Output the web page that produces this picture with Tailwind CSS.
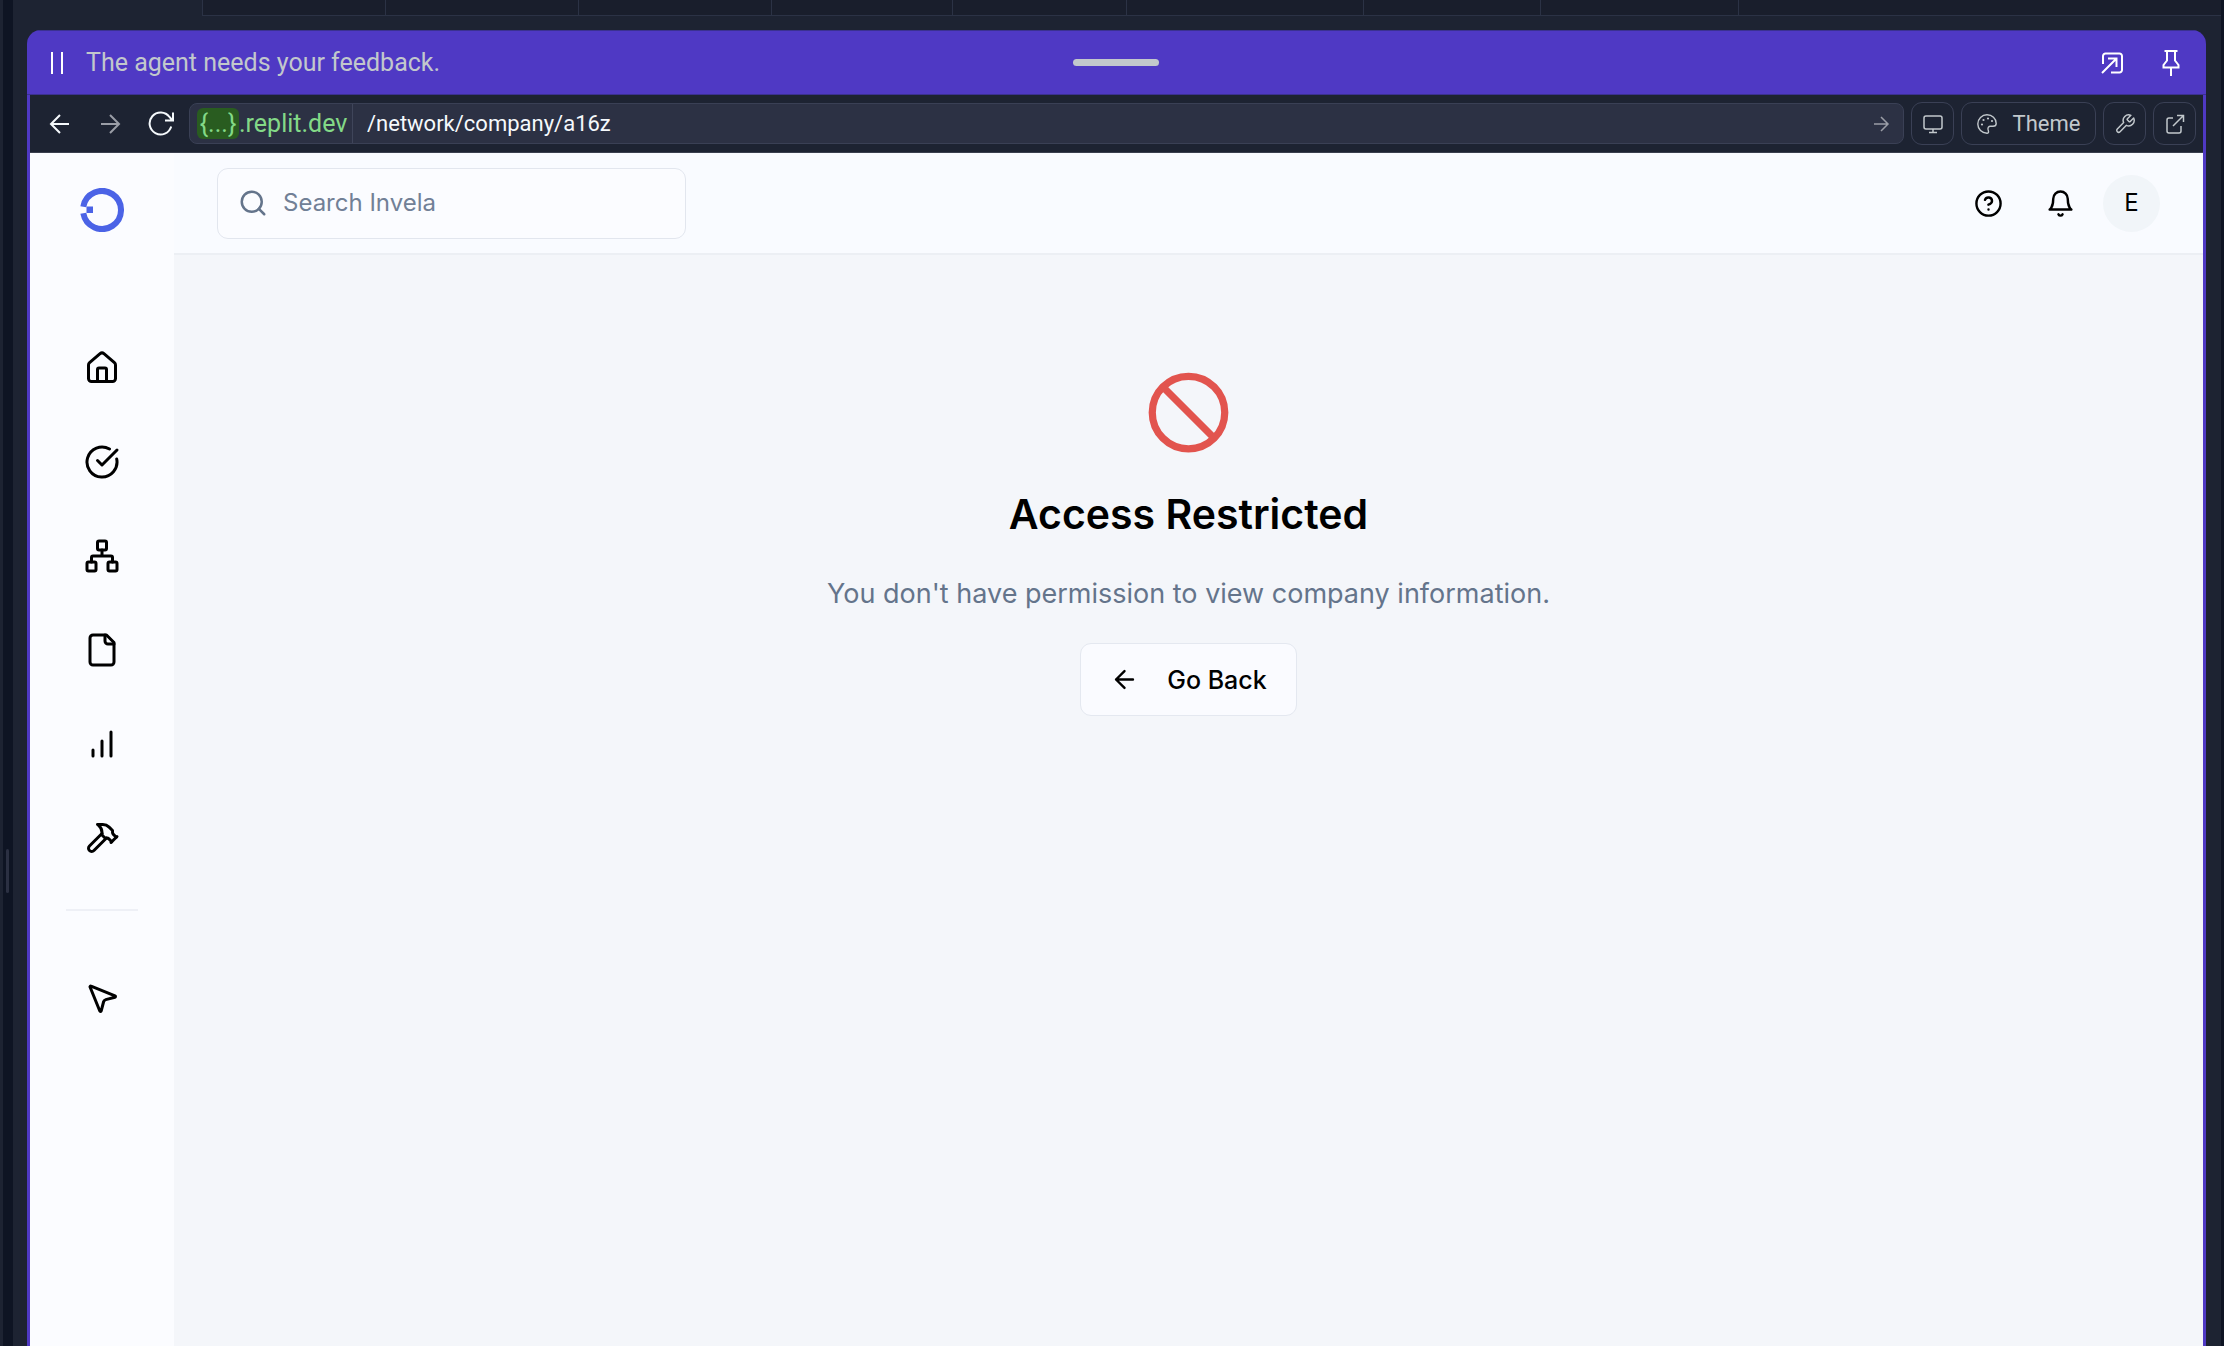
<!DOCTYPE html>
<html lang="en">
<head>
<meta charset="utf-8">
<title>Invela – Access Restricted</title>
<script src="https://cdn.jsdelivr.net/npm/@tailwindcss/browser@4"></script>
</head>
<body class="flex h-screen overflow-hidden bg-[#1d2332] font-['Roboto',sans-serif]">
  <div class="w-[3px] shrink-0 bg-[#1d2332]"></div>
  <div class="flex w-[10px] shrink-0 flex-col bg-[#0e1423] pt-[849px] pl-[3px]" role="separator">
    <div class="h-[44px] w-[3px] rounded-full bg-[#2b3042]"></div>
  </div>

  <div class="flex min-w-0 flex-1 flex-col">
    <!-- Tab strip -->
    <div class="flex h-4 shrink-0">
      <div class="w-[189px]"></div>
      <div class="w-[183px] border-b border-l border-[#2b3245] bg-[#191e2c]"></div>
      <div class="w-[193px] border-b border-l border-[#2b3245] bg-[#191e2c]"></div>
      <div class="w-[193px] border-b border-l border-[#2b3245] bg-[#191e2c]"></div>
      <div class="w-[181px] border-b border-l border-[#2b3245] bg-[#191e2c]"></div>
      <div class="w-[174px] border-b border-l border-[#2b3245] bg-[#191e2c]"></div>
      <div class="w-[237px] border-b border-l border-[#2b3245] bg-[#191e2c]"></div>
      <div class="w-[177px] border-b border-l border-[#2b3245] bg-[#191e2c]"></div>
      <div class="w-[198px] border-b border-l border-[#2b3245] bg-[#191e2c]"></div>
      <div class="flex-1 border-b border-l border-[#2b3245] bg-[#191e2c]"></div>
    </div>

    <div class="mr-[15px] ml-[14px] mt-[14px] flex min-h-0 flex-1 flex-col overflow-hidden rounded-t-[14px]">
      <!-- Agent banner -->
      <div class="grid h-[65px] shrink-0 grid-cols-[1fr_auto_1fr] items-center border-t border-b border-[#3b3191] bg-[#4f39c4] pr-[26px] pl-6">
        <div class="flex items-center">
          <svg class="h-[22px] w-[12px]" viewBox="0 0 12 22" stroke="#fff" stroke-width="2"><path d="M1 0v22M11 0v22"/></svg>
          <span class="ml-[23px] text-[25px] leading-8 text-[#c2c8cc]">The agent needs your feedback.</span>
        </div>
        <div class="h-[7px] w-[86px] rounded-full bg-[#c2c8cc]"></div>
        <div class="flex items-center justify-end gap-[39px]">
          <button aria-label="Open in tab"><svg class="size-[22px]" viewBox="0 0 22 22" fill="none" stroke="#fff" stroke-width="2"><path d="M2 12V4a2.500 2.500 0 0 1 2.500-2.500h14A2.500 2.500 0 0 1 21 4v14a2.500 2.500 0 0 1-2.500 2.500H10M1 21 15 7M7 6.500h8.500V15"/></svg></button>
          <button aria-label="Pin"><svg class="h-[27px] w-[18px]" viewBox="0 0 18 27" fill="none" stroke="#fff" stroke-width="2"><path d="M2.500 2h13M5 2v9.500L1.500 16v2.500h15V16L13 11.500V2M9 18.500V27"/></svg></button>
        </div>
      </div>

      <!-- Browser window -->
      <div class="flex min-h-0 flex-1 flex-col border-x-[3px] border-[#4f39c4]">
        <div class="flex h-[58px] shrink-0 items-center border-b border-[#3a3f4e] bg-[#1d2332] pr-[7px] pl-[18px]">
          <button aria-label="Back"><svg class="size-[24px]" viewBox="0 0 24 24" fill="none" stroke="#f5f9fc" stroke-width="2"><path d="M21 12H3M12 3 3 12l9 9"/></svg></button>
          <button class="ml-[26px]" aria-label="Forward"><svg class="size-[24px]" viewBox="0 0 24 24" fill="none" stroke="#9a9da6" stroke-width="2"><path d="M3 12h18M12 3l9 9-9 9"/></svg></button>
          <button class="ml-[26px]" aria-label="Reload"><svg class="size-[26px]" viewBox="0 0 26 26" fill="none" stroke="#f5f9fc" stroke-width="2"><path d="M23.200 15.500A11 11 0 1 1 21.500 6l3 3.500M25 1.500V9.500H17"/></svg></button>
          <div class="ml-[15px] flex h-[41px] flex-1 items-center rounded-lg border border-[#3a4055] bg-[#2c3144] pl-[7px] text-[22px] leading-8">
            <span class="flex h-[31px] w-[42px] items-center justify-center rounded-md bg-[#295c20] text-[25px] text-[#83d987]">{...}</span>
            <span class="w-[113px] text-[25px] text-[#83d987]">.replit.dev</span>
            <input aria-label="Path" value="/network/company/a16z" class="h-[39px] min-w-0 flex-1 border-l border-[#3f455a] bg-transparent pl-[14px] text-[#f5f9fc]">
            <button class="mr-[13px]" aria-label="Go"><svg class="size-[18px]" viewBox="0 0 18 18" fill="none" stroke="#9a9da6" stroke-width="1.500"><path d="M2 9h14M9 2l7 7-7 7"/></svg></button>
          </div>
          <div class="ml-[7px] flex gap-[7px] text-[#c2c8cc]">
            <button class="flex size-[43px] items-center justify-center rounded-[11px] border border-[#3a4055]" aria-label="Devices"><svg class="size-[20px]" viewBox="0 0 20 20" fill="none" stroke="currentColor" stroke-width="1.500"><rect x="1" y="2" width="18" height="13" rx="2"/><path d="M10 15v3.500M6 18.500h8"/></svg></button>
            <button class="flex h-[43px] w-[135px] items-center justify-center gap-4 rounded-[11px] border border-[#3a4055]">
              <svg class="size-[20px]" viewBox="0 0 20 20" fill="none" stroke="currentColor" stroke-width="1.400"><path d="M10 .8C4.900.8.800 4.900.800 10S4.900 19.200 10 19.200c1.300 0 1.700-.9 1.500-1.800l-.5-2.200c-.3-1.600.7-2.900 2.300-2.900h2.700c1.900 0 3.200-1.200 3.200-2.800C19.200 4.500 15.100.8 10 .8Z"/><g fill="currentColor" stroke="none"><circle cx="5" cy="10.500" r="1.100"/><circle cx="6.500" cy="6" r="1.100"/><circle cx="11" cy="4.500" r="1.100"/><circle cx="15" cy="7" r="1.100"/></g></svg>
              <span class="text-[22px] leading-8">Theme</span>
            </button>
            <button class="flex size-[43px] items-center justify-center rounded-[11px] border border-[#3a4055]" aria-label="Developer tools"><svg class="size-[22px]" viewBox="0 0 24 24" fill="none" stroke="currentColor" stroke-width="1.600" stroke-linejoin="round"><path d="M14.700 6.300a1 1 0 0 0 0 1.400l1.600 1.600a1 1 0 0 0 1.400 0l3.770-3.770a6 6 0 0 1-7.940 7.940l-6.910 6.910a2.120 2.120 0 0 1-3-3l6.910-6.910a6 6 0 0 1 7.940-7.940l-3.760 3.760z"/></svg></button>
            <button class="flex size-[43px] items-center justify-center rounded-[11px] border border-[#3a4055]" aria-label="Open in new tab"><svg class="size-[20px]" viewBox="0 0 20 20" fill="none" stroke="currentColor" stroke-width="1.500"><path d="M8 4H4a2 2 0 0 0-2 2v11a2 2 0 0 0 2 2h10a2 2 0 0 0 2-2v-5M12 1.500h6.500V8M18.500 1.500 8 12"/></svg></button>
          </div>
        </div>

        <!-- Invela application -->
        <div class="flex min-h-0 flex-1 bg-[#f4f6fa] font-['Inter',sans-serif] text-black">
          <aside class="flex w-[144px] shrink-0 flex-col items-center bg-[#fbfcff] pt-[35px]">
            <a href="#" aria-label="Invela"><svg class="size-[44px]" viewBox="0 0 44 44" fill="none"><path d="M3.300 18.700A19 19 0 1 1 3.300 25.300" stroke="#4b63e6" stroke-width="6"/><path d="M6.500 18.500h6.500v6.500H6.500z" fill="#4b63e6"/></svg></a>
            <nav class="mt-[89px] flex flex-col items-center">
              <a href="#" aria-label="Home" class="flex h-[94px] w-[72px] items-center justify-center"><svg class="size-[36px]" viewBox="0 0 24 24" fill="none" stroke="currentColor" stroke-width="2" stroke-linecap="round" stroke-linejoin="round"><path d="M15 21v-8a1 1 0 0 0-1-1h-4a1 1 0 0 0-1 1v8"/><path d="M3 10a2 2 0 0 1 .709-1.528l7-5.999a2 2 0 0 1 2.582 0l7 5.999A2 2 0 0 1 21 10v9a2 2 0 0 1-2 2H5a2 2 0 0 1-2-2z"/></svg></a>
              <a href="#" aria-label="Tasks" class="flex h-[94px] w-[72px] items-center justify-center"><svg class="size-[36px]" viewBox="0 0 24 24" fill="none" stroke="currentColor" stroke-width="2" stroke-linecap="round" stroke-linejoin="round"><path d="M21.801 10A10 10 0 1 1 17 3.335"/><path d="m9 11 3 3L22 4"/></svg></a>
              <a href="#" aria-label="Network" class="flex h-[94px] w-[72px] items-center justify-center"><svg class="size-[36px]" viewBox="0 0 24 24" fill="none" stroke="currentColor" stroke-width="2" stroke-linecap="round" stroke-linejoin="round"><rect x="16" y="16" width="6" height="6" rx="1"/><rect x="2" y="16" width="6" height="6" rx="1"/><rect x="9" y="2" width="6" height="6" rx="1"/><path d="M5 16v-3a1 1 0 0 1 1-1h12a1 1 0 0 1 1 1v3M12 12V8"/></svg></a>
              <a href="#" aria-label="Files" class="flex h-[94px] w-[72px] items-center justify-center"><svg class="size-[36px]" viewBox="0 0 24 24" fill="none" stroke="currentColor" stroke-width="2" stroke-linecap="round" stroke-linejoin="round"><path d="M15 2H6a2 2 0 0 0-2 2v16a2 2 0 0 0 2 2h12a2 2 0 0 0 2-2V7Z"/><path d="M14 2v4a2 2 0 0 0 2 2h4"/></svg></a>
              <a href="#" aria-label="Insights" class="flex h-[94px] w-[72px] items-center justify-center"><svg class="size-[36px]" viewBox="0 0 24 24" fill="none" stroke="currentColor" stroke-width="2" stroke-linecap="round" stroke-linejoin="round"><path d="M12 20V10M18 20V4M6 20v-4"/></svg></a>
              <a href="#" aria-label="Builder" class="flex h-[94px] w-[72px] items-center justify-center"><svg class="size-[36px]" viewBox="0 0 24 24" fill="none" stroke="currentColor" stroke-width="2" stroke-linecap="round" stroke-linejoin="round"><path d="m15 12-8.373 8.373a1 1 0 1 1-3-3L12 9"/><path d="m18 15 4-4"/><path d="m21.500 11.500-1.914-1.914A2 2 0 0 1 19 8.172V7l-2.260-2.260a6 6 0 0 0-4.202-1.756L9 2.960l.92.82A6.180 6.180 0 0 1 12 8.400V10l2 2h1.172a2 2 0 0 1 1.414.586L18.500 14.500"/></svg></a>
              <div class="my-[24px] h-[2px] w-[72px] bg-[#eef0f6]"></div>
              <a href="#" aria-label="Playground" class="flex h-[126px] w-[72px] items-center justify-center"><svg class="size-[36px]" viewBox="0 0 24 24" fill="none" stroke="currentColor" stroke-width="2" stroke-linecap="round" stroke-linejoin="round"><path d="M4.037 4.688a.495.495 0 0 1 .651-.651l16 6.500a.5.5 0 0 1-.063.947l-6.124 1.580a2 2 0 0 0-1.438 1.435l-1.579 6.126a.5.5 0 0 1-.947.063z"/></svg></a>
            </nav>
          </aside>

          <div class="flex min-w-0 flex-1 flex-col">
            <header class="flex h-[102px] shrink-0 items-center border-b-2 border-[#eceff4] bg-[#f9fbff] px-[43px]">
              <label class="flex h-[71px] w-[469px] items-center gap-[15px] rounded-[11px] border border-[#e2e6ee] bg-[#fbfcff] pl-[20px]">
                <svg class="size-[30px] text-[#64748b]" viewBox="0 0 24 24" fill="none" stroke="currentColor" stroke-width="2" stroke-linecap="round"><circle cx="11" cy="11" r="8"/><path d="m21 21-4.300-4.300"/></svg>
                <input type="search" placeholder="Search Invela" aria-label="Search Invela" class="min-w-0 flex-1 bg-transparent text-[24px] leading-9 placeholder:text-[#718096]">
              </label>
              <div class="ml-auto flex items-center">
                <button aria-label="Help" class="flex size-[72px] items-center justify-center"><svg class="size-[29px]" viewBox="0 0 24 24" fill="none" stroke="currentColor" stroke-width="2" stroke-linecap="round" stroke-linejoin="round"><circle cx="12" cy="12" r="10"/><path d="M9.090 9a3 3 0 0 1 5.830 1c0 2-3 3-3 3M12 17h.01"/></svg></button>
                <button aria-label="Notifications" class="flex size-[72px] items-center justify-center"><svg class="size-[29px]" viewBox="0 0 24 24" fill="none" stroke="currentColor" stroke-width="2" stroke-linecap="round" stroke-linejoin="round"><path d="M6 8a6 6 0 0 1 12 0c0 7 3 9 3 9H3s3-2 3-9M10.300 21a1.940 1.940 0 0 0 3.400 0"/></svg></button>
                <button class="ml-[7px] flex size-[57px] items-center justify-center rounded-full bg-[#f1f5f9] text-[24px] leading-9">E</button>
              </div>
            </header>

            <main class="flex flex-1 flex-col items-center pt-[114px]">
              <svg class="size-[87px]" viewBox="0 0 24 24" fill="none" stroke="#e2544e" stroke-width="2"><circle cx="12" cy="12" r="10"/><path d="m4.900 4.900 14.200 14.200"/></svg>
              <h1 class="mt-[29px] text-[41px] leading-[58px] font-semibold">Access Restricted</h1>
              <p class="mt-[29px] text-[27px] leading-[44px] text-[#64748b]">You don't have permission to view company information.</p>
              <button class="mt-[27px] flex h-[73px] w-[217px] items-center justify-center gap-[28px] rounded-[11px] border border-[#e4e8f0] bg-[#fafbff] text-[25px] leading-9 font-medium">
                <svg class="size-[29px]" viewBox="0 0 24 24" fill="none" stroke="currentColor" stroke-width="2" stroke-linecap="round" stroke-linejoin="round"><path d="m12 19-7-7 7-7M19 12H5"/></svg>
                Go Back
              </button>
            </main>
          </div>
        </div>
      </div>
    </div>
  </div>
  <div class="w-[3px] shrink-0 bg-[#0e1423]"></div>
</body>
</html>
